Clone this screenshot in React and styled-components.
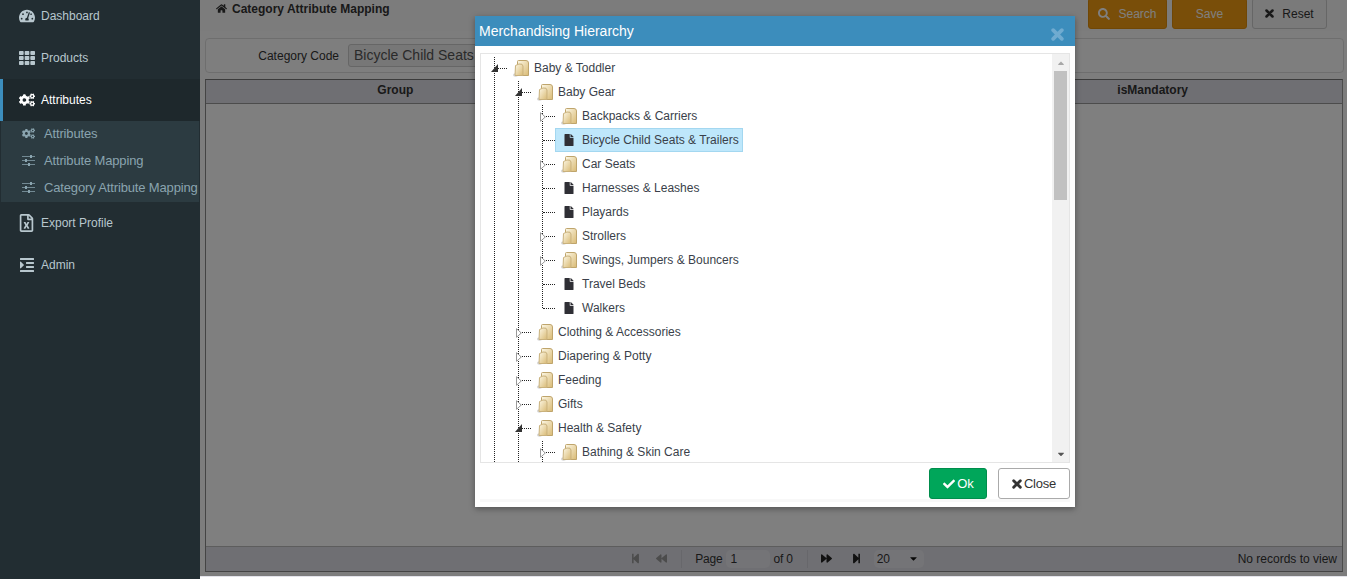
import React from 'react';
import styled, { createGlobalStyle } from 'styled-components';
import {
  FaTachometerAlt,
  FaTh,
  FaCogs,
  FaRegFileExcel,
  FaIndent,
  FaHome,
  FaSearch,
  FaCheck,
  FaFile,
  FaStepBackward,
  FaStepForward,
  FaBackward,
  FaForward,
  FaCaretDown,
  FaCaretUp,
} from 'react-icons/fa';

const GlobalStyle = createGlobalStyle`
  html, body {
    margin: 0;
    height: 579px;
    overflow: hidden;
    background: #fff;
    font-family: "Liberation Sans", Arial, sans-serif;
    font-size: 12px;
    color: #333;
  }
`;

function SlidersIcon() {
  return (
    <svg viewBox="0 0 13 12" fill="currentColor">
      <path d="M0 1.5h13v1H0zM0 5.5h13v1H0zM0 9.5h13v1H0z" opacity="0.75" />
      <path d="M8 .5h2v3H8zM3 4.5h2v3H3zM6 8.5h2v3H6z" />
    </svg>
  );
}

function TimesIcon({ size = 9 }) {
  return (
    <svg width={size} height={size} viewBox="0 0 12 12">
      <path d="M2 2 L10 10 M10 2 L2 10" stroke="currentColor" strokeWidth="3.4" strokeLinecap="round" />
    </svg>
  );
}

const menu = [
  { label: 'Dashboard', Icon: FaTachometerAlt },
  { label: 'Products', Icon: FaTh },
  {
    label: 'Attributes',
    Icon: FaCogs,
    active: true,
    children: [
      { label: 'Attributes', Icon: FaCogs },
      { label: 'Attribute Mapping', Icon: SlidersIcon },
      { label: 'Category Attribute Mapping', Icon: SlidersIcon },
    ],
  },
  { label: 'Export Profile', Icon: FaRegFileExcel, tall: true },
  { label: 'Admin', Icon: FaIndent },
];

const tree = [
  {
    label: 'Baby & Toddler',
    open: true,
    more: true,
    children: [
      {
        label: 'Baby Gear',
        open: true,
        children: [
          { label: 'Backpacks & Carriers', folder: true },
          { label: 'Bicycle Child Seats & Trailers', selected: true },
          { label: 'Car Seats', folder: true },
          { label: 'Harnesses & Leashes' },
          { label: 'Playards' },
          { label: 'Strollers', folder: true },
          { label: 'Swings, Jumpers & Bouncers', folder: true },
          { label: 'Travel Beds' },
          { label: 'Walkers' },
        ],
      },
      { label: 'Clothing & Accessories', folder: true },
      { label: 'Diapering & Potty', folder: true },
      { label: 'Feeding', folder: true },
      { label: 'Gifts', folder: true },
      {
        label: 'Health & Safety',
        open: true,
        more: true,
        children: [{ label: 'Bathing & Skin Care', folder: true, more: true }],
      },
    ],
  },
];

function FolderIcon() {
  return (
    <svg width="16" height="17" viewBox="0 0 16 17">
      <defs>
        <linearGradient id="folderFill" x1="0" y1="0" x2="1" y2="1">
          <stop offset="0" stopColor="#fdf8e6" />
          <stop offset="1" stopColor="#d9ba74" />
        </linearGradient>
      </defs>
      <ellipse cx="2.6" cy="15" rx="2.6" ry="1.7" fill="#d4d4d4" />
      <path d="M4.5 1.5 Q4.5 .5 5.5 .5 H13 Q15.5 .5 15.5 3 V15.5 H4.5 Z" fill="url(#folderFill)" stroke="#bfa56c" />
      <path d="M2.5 5.5 L6 4 Q10 3.5 10 6 V15.5 H2 Z" fill="url(#folderFill)" stroke="#c9b17c" />
    </svg>
  );
}

function Toggle({ open }) {
  return open ? (
    <svg width="7" height="8" viewBox="0 0 7 8">
      <path d="M7 0 V8 H0 Z" fill="#333" />
    </svg>
  ) : (
    <svg width="6" height="10" viewBox="0 0 6 10">
      <path d="M.5 .7 L5.3 5 L.5 9.3 Z" fill="#fff" stroke="#999" />
    </svg>
  );
}

function TreeBranch({ nodes }) {
  return (
    <Branch>
      {nodes.map((node, i) => (
        <Node key={node.label} $last={i === nodes.length - 1 && !node.more}>
          <Row>
            <Connector>
              {(node.folder || node.open) && (
                <Toggler $open={node.open}>
                  <Toggle open={node.open} />
                </Toggler>
              )}
            </Connector>
            <Label $selected={node.selected}>
              <IconSlot $leaf={!node.folder && !node.open}>
                {node.folder || node.open ? <FolderIcon /> : <FaFile />}
              </IconSlot>
              {node.label}
            </Label>
          </Row>
          {node.children && <TreeBranch nodes={node.children} />}
        </Node>
      ))}
    </Branch>
  );
}

function App() {
  return (
    <Layout>
      <GlobalStyle />
      <Sidebar>
        {menu.map(({ label, Icon, active, children, tall }) => (
          <div key={label}>
            <MenuItem $active={active}>
              <MenuIcon $tall={tall}>
                <Icon />
              </MenuIcon>
              {label}
            </MenuItem>
            {children && (
              <SubMenu>
                {children.map((child) => (
                  <SubItem key={child.label}>
                    <SubIcon>
                      <child.Icon />
                    </SubIcon>
                    {child.label}
                  </SubItem>
                ))}
              </SubMenu>
            )}
          </div>
        ))}
      </Sidebar>

      <Main>
        <Page>
          <TopBar>
            <Crumb>
              <FaHome />
              Category Attribute Mapping
            </Crumb>
            <Actions>
              <ActionButton $primary>
                <FaSearch />
                Search
              </ActionButton>
              <ActionButton $primary>Save</ActionButton>
              <ActionButton>
                <TimesIcon />
                Reset
              </ActionButton>
            </Actions>
          </TopBar>

          <FilterPanel>
            <FilterLabel>Category Code</FilterLabel>
            <FilterValue>Bicycle Child Seats &amp; Trailers</FilterValue>
          </FilterPanel>

          <Grid>
            <GridHead>
              <HeadCell>Group</HeadCell>
              <HeadCell />
              <HeadCell>isMandatory</HeadCell>
            </GridHead>
            <GridBody />
            <Pager>
              <span />
              <PagerControls>
                <PagerButton $muted $gap={15}>
                  <FaStepBackward />
                </PagerButton>
                <PagerButton $muted $gap={14}>
                  <FaBackward />
                </PagerButton>
                <PagerDivider />
                <span>Page</span>
                <PageInput>1</PageInput>
                <span>of 0</span>
                <PagerDivider $left={14} />
                <PagerButton $gap={19}>
                  <FaForward />
                </PagerButton>
                <PagerButton $gap={12}>
                  <FaStepForward />
                </PagerButton>
                <PageSize>
                  20
                  <FaCaretDown />
                </PageSize>
              </PagerControls>
              <PagerInfo>No records to view</PagerInfo>
            </Pager>
          </Grid>
        </Page>

        <Backdrop>
          <Modal>
            <ModalHeader>
              Merchandising Hierarchy
              <CloseMark>
                <TimesIcon size={13} />
              </CloseMark>
            </ModalHeader>
            <TreeBox>
              <TreeScroll>
                <TreeBranch nodes={tree} />
              </TreeScroll>
              <ScrollTrack>
                <ScrollArrow $dim>
                  <FaCaretUp />
                </ScrollArrow>
                <ScrollThumb />
                <ScrollArrow>
                  <FaCaretDown />
                </ScrollArrow>
              </ScrollTrack>
            </TreeBox>
            <ModalFooter>
              <OkButton>
                <FaCheck />
                Ok
              </OkButton>
              <CloseButton>
                <TimesIcon size={10} />
                Close
              </CloseButton>
            </ModalFooter>
            <FooterEdge />
          </Modal>
        </Backdrop>
      </Main>
    </Layout>
  );
}

export default App;

const Layout = styled.div`
  display: flex;
  width: 1347px;
  height: 579px;
  overflow: hidden;
`;

const Sidebar = styled.nav`
  width: 200px;
  flex: none;
  height: 585px;
  margin-top: -5px;
  background: #222d32;
  color: #b8c7ce;
`;

const MenuItem = styled.div`
  display: flex;
  align-items: center;
  height: 42px;
  padding-left: ${(p) => (p.$active ? '15px' : '18px')};
  border-left: ${(p) => (p.$active ? '3px solid #3c8dbc' : '0')};
  background: ${(p) => (p.$active ? '#1e282c' : 'transparent')};
  color: ${(p) => (p.$active ? '#fff' : '#b8c7ce')};
  font-size: 12px;
`;

const MenuIcon = styled.span`
  display: flex;
  justify-content: center;
  width: 17px;
  margin-right: 6px;
  font-size: ${(p) => (p.$tall ? '18px' : '16px')};
`;

const SubMenu = styled.div`
  margin: 0 1px;
  height: 81px;
  background: #2c3b41;
  color: #8aa4af;
`;

const SubItem = styled.div`
  display: flex;
  align-items: center;
  box-sizing: border-box;
  height: 27px;
  padding: 0 0 2px 20px;
  font-size: 13px;
  letter-spacing: -0.15px;
  white-space: nowrap;
`;

const SubIcon = styled.span`
  display: flex;
  justify-content: center;
  flex: none;
  width: 15px;
  margin-right: 8px;
  svg {
    width: 13px;
    height: 13px;
  }
`;

const Main = styled.main`
  position: relative;
  flex: 1;
  min-width: 0;
  height: 579px;
`;

const Page = styled.div`
  height: 576px;
  border-bottom: 1px solid #e3e3ea;
  background: #fbfbfb;
`;

const TopBar = styled.header`
  display: flex;
  justify-content: space-between;
  height: 31px;
  padding: 0 20px 0 16px;
  background: #f9f9f9;
`;

const Crumb = styled.div`
  display: flex;
  align-items: center;
  gap: 5px;
  height: 17px;
  font-weight: 700;
  font-size: 12px;
  svg {
    font-size: 11px;
  }
`;

const Actions = styled.div`
  display: flex;
  gap: 5px;
  margin-top: -2px;
`;

const ActionButton = styled.button`
  display: flex;
  align-items: center;
  justify-content: center;
  gap: 8px;
  width: ${(p) => (p.$primary ? '79px' : '75px')};
  height: 31px;
  border: 1px solid ${(p) => (p.$primary ? '#e08e0b' : '#ccc')};
  border-radius: 3px;
  background: ${(p) => (p.$primary ? '#f39c12' : '#f4f4f4')};
  color: ${(p) => (p.$primary ? '#fff' : '#333')};
  font: 12px "Liberation Sans", Arial, sans-serif;
  &:nth-child(2) {
    width: 75px;
  }
`;

const FilterPanel = styled.section`
  display: flex;
  align-items: center;
  box-sizing: border-box;
  height: 35px;
  margin: 7px 3px 6px 5px;
  padding-left: 52px;
  border: 1px solid #ddd;
  border-radius: 4px;
  background: #fdfdfd;
`;

const FilterLabel = styled.label`
  width: 81px;
  margin-right: 9px;
  text-align: right;
`;

const FilterValue = styled.div`
  box-sizing: border-box;
  width: 280px;
  height: 23px;
  padding-left: 5px;
  border: 1px solid #ccc;
  border-radius: 3px;
  background: #eee;
  color: #555;
  font-size: 14px;
  line-height: 21px;
  white-space: nowrap;
`;

const Grid = styled.section`
  display: flex;
  flex-direction: column;
  box-sizing: border-box;
  height: 493px;
  margin: 0 4px 0 5px;
  border: 1px solid #888;
  border-top: 1px solid #777;
  border-right: 1px solid #999;
  background: #fff;
`;

const GridHead = styled.div`
  display: grid;
  grid-template-columns: repeat(3, 1fr);
  flex: none;
  height: 23px;
  border-bottom: 1px solid #999;
  background: #dfdfe6;
`;

const HeadCell = styled.div`
  text-align: center;
  font-weight: 700;
  line-height: 21px;
`;

const GridBody = styled.div`
  flex: 1;
`;

const Pager = styled.footer`
  display: grid;
  grid-template-columns: 1fr auto 1fr;
  align-items: center;
  flex: none;
  box-sizing: border-box;
  height: 25px;
  padding-bottom: 1px;
  border-top: 1px solid #bbb;
  background: #dfdfe6;
`;

const PagerControls = styled.div`
  display: flex;
  align-items: center;
  height: 100%;
  margin-left: 6px;
  letter-spacing: -0.2px;
`;

const PagerButton = styled.span`
  display: flex;
  margin-right: ${(p) => p.$gap}px;
  color: ${(p) => (p.$muted ? '#999' : '#222')};
  font-size: 11px;
`;

const PagerDivider = styled.span`
  width: 1px;
  height: 18px;
  margin: 0 13px 0 ${(p) => p.$left || 0}px;
  background: #cfcfd6;
`;

const PageInput = styled.span`
  box-sizing: border-box;
  width: 44px;
  height: 18px;
  margin: 0 4px 0 3px;
  padding-left: 5px;
  border-radius: 5px;
  background: #e9e9ee;
  line-height: 18px;
`;

const PageSize = styled.span`
  display: flex;
  align-items: center;
  justify-content: space-between;
  box-sizing: border-box;
  width: 50px;
  height: 18px;
  padding: 0 5px 0 3px;
  border-radius: 5px;
  background: #e9e9ee;
  svg {
    color: #111;
    font-size: 11px;
  }
`;

const PagerInfo = styled.div`
  justify-self: end;
  padding-right: 5px;
`;

const Backdrop = styled.div`
  position: absolute;
  top: 0;
  left: 0;
  right: 0;
  height: 576px;
  padding: 16px 0 0 275px;
  box-sizing: border-box;
  background: rgba(0, 0, 0, 0.5);
`;

const Modal = styled.div`
  width: 600px;
  height: 491px;
  background: #fff;
  box-shadow: 0 2px 6px rgba(0, 0, 0, 0.35);
`;

const ModalHeader = styled.div`
  display: flex;
  align-items: center;
  justify-content: space-between;
  height: 30px;
  padding: 0 11px 0 4px;
  background: #3c8dbc;
  color: #fff;
  font-size: 14px;
`;

const CloseMark = styled.span`
  display: flex;
  margin-top: 6px;
  color: #70abd0;
`;

const TreeBox = styled.div`
  display: flex;
  box-sizing: border-box;
  height: 410px;
  margin: 7px 5px 0;
  border: 1px solid #e5e5e5;
`;

const TreeScroll = styled.div`
  flex: 1;
  padding: 2px 0 0 13px;
  overflow: hidden;
`;

const Branch = styled.ul`
  margin: 0;
  padding: 0;
  list-style: none;
  ul & {
    margin-left: 24px;
  }
`;

const Node = styled.li`
  position: relative;
  &::before {
    content: '';
    position: absolute;
    left: 0;
    top: 1px;
    height: ${(p) => (p.$last ? '11px' : 'calc(100% - 1px)')};
    border-left: 1px dotted #222;
  }
`;

const Row = styled.div`
  display: flex;
  height: 24px;
`;

const Connector = styled.span`
  position: relative;
  flex: none;
  width: 13px;
  &::after {
    content: '';
    position: absolute;
    left: 1px;
    right: 0;
    top: 12px;
    border-top: 1px dotted #222;
  }
`;

const Toggler = styled.span`
  position: absolute;
  z-index: 1;
  display: flex;
  left: ${(p) => (p.$open ? '-3px' : '-2px')};
  top: 8px;
`;

const Label = styled.span`
  display: flex;
  align-items: center;
  box-sizing: border-box;
  height: 24px;
  padding: 0 3px 0 ${(p) => (p.$selected ? '5px' : '6px')};
  border: ${(p) => (p.$selected ? '1px solid #a3d7f0' : '0')};
  background: ${(p) => (p.$selected ? '#bee7fb' : 'transparent')};
  color: #3a3f4a;
  font-size: 12px;
  white-space: nowrap;
`;

const IconSlot = styled.span`
  display: flex;
  align-items: center;
  box-sizing: border-box;
  width: 16px;
  margin-right: 5px;
  padding-left: ${(p) => (p.$leaf ? '2px' : '0')};
  color: #2f2f35;
  font-size: 12px;
`;

const ScrollTrack = styled.div`
  display: flex;
  flex-direction: column;
  justify-content: space-between;
  flex: none;
  box-sizing: border-box;
  width: 17px;
  background: #f1f1f1;
`;

const ScrollArrow = styled.span`
  display: flex;
  justify-content: center;
  align-items: center;
  height: 17px;
  color: ${(p) => (p.$dim ? '#a8a8a8' : '#555')};
  font-size: 10px;
`;

const ScrollThumb = styled.div`
  height: 129px;
  margin: 0 2px auto;
  background: #c1c1c1;
`;

const ModalFooter = styled.div`
  display: flex;
  justify-content: flex-end;
  gap: 11px;
  padding: 5px 5px 0;
`;

const FooterEdge = styled.div`
  height: 3px;
  margin: 0 5px;
  background: #f8f8f8;
`;

const footerButton = `
  display: flex;
  align-items: center;
  justify-content: center;
  gap: 2px;
  height: 31px;
  border-radius: 3px;
  font: 13px "Liberation Sans", Arial, sans-serif;
  svg {
    font-size: 12px;
  }
`;

const OkButton = styled.button`
  ${footerButton}
  width: 58px;
  padding-left: 7px;
  border: 1px solid #008d4c;
  background: #00a65a;
  color: #fff;
`;

const CloseButton = styled.button`
  ${footerButton}
  width: 72px;
  padding-left: 6px;
  border: 1px solid #aaa;
  background: #fff;
  color: #333;
  letter-spacing: -0.2px;
`;
